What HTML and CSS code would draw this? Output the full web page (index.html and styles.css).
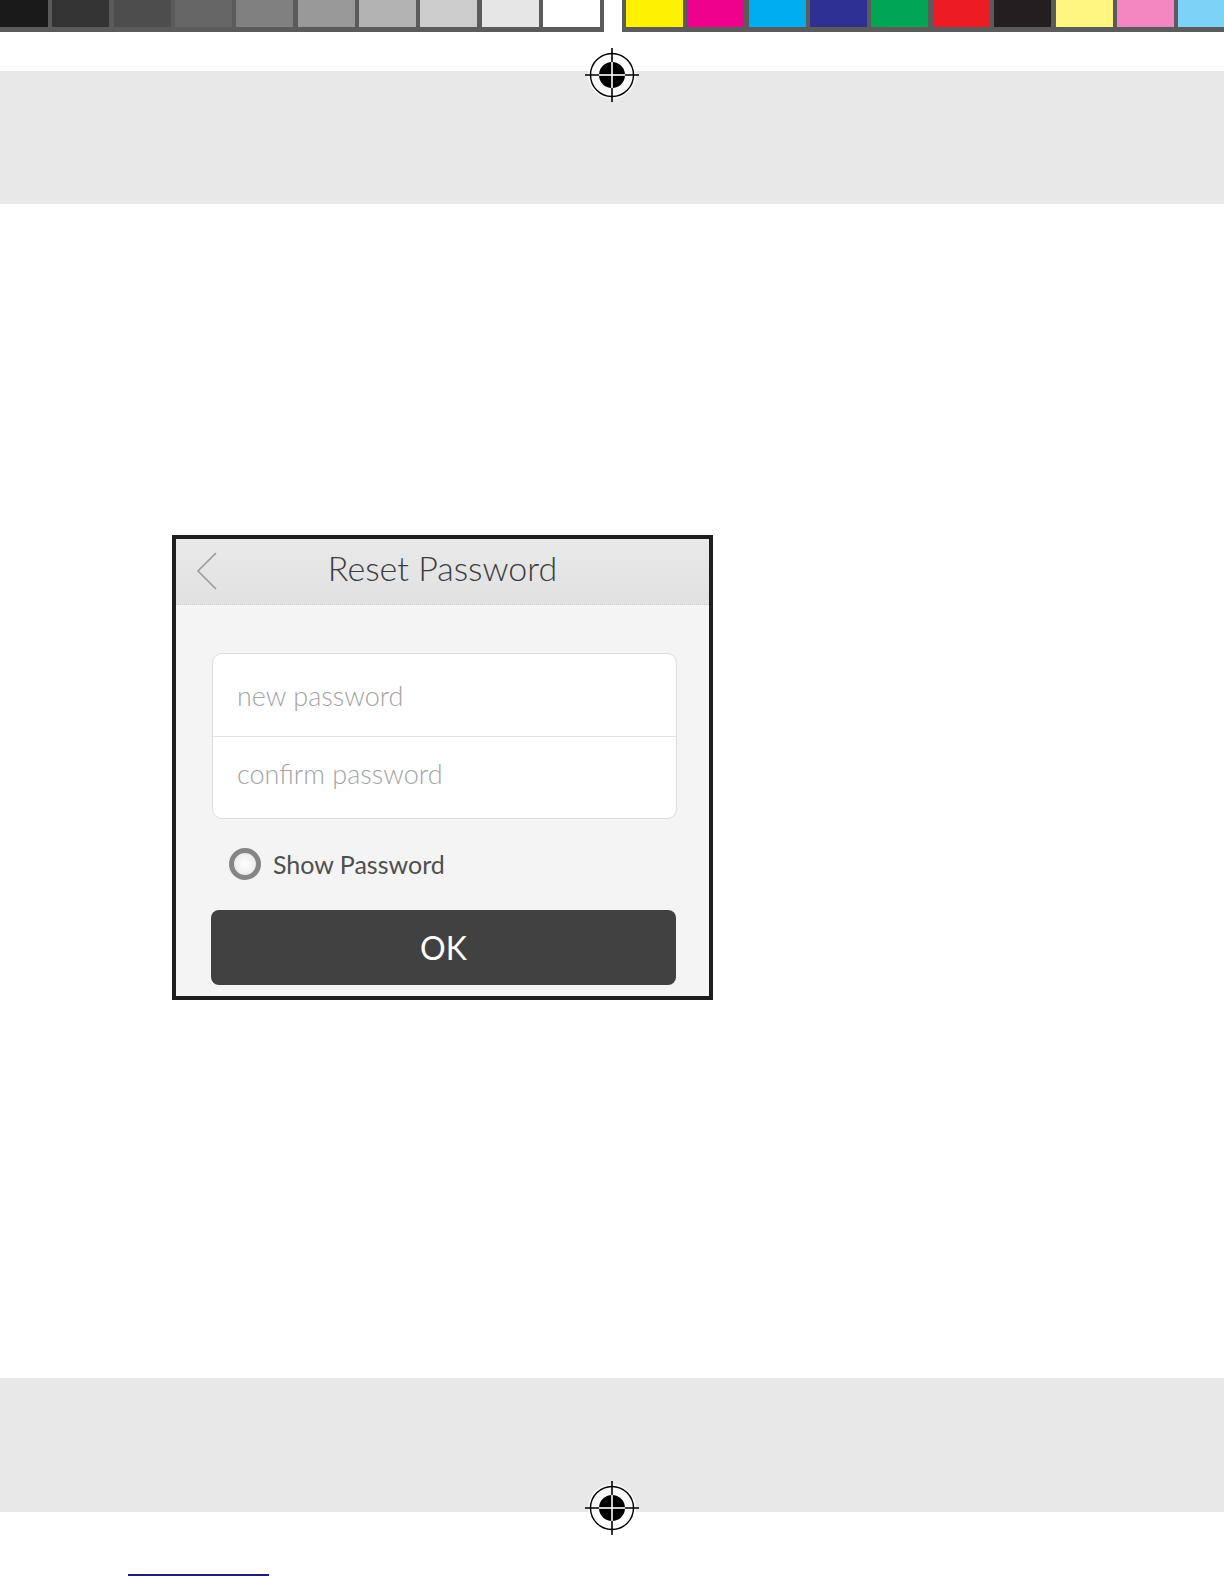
FILE: index.html
```html
<!DOCTYPE html>
<html lang="en">
<head>
    <meta charset="UTF-8">
    <meta name="viewport" content="width=device-width, initial-scale=1.0">
    <title>Reset Password</title>
    <link rel="stylesheet" href="styles.css">
</head>
<body>
    <div class="colorbar">
        <div class="bar bar-gray">
            <span class="swatch" style="background:#1a1a1a"></span>
            <span class="swatch" style="background:#333333"></span>
            <span class="swatch" style="background:#4d4d4d"></span>
            <span class="swatch" style="background:#666666"></span>
            <span class="swatch" style="background:#808080"></span>
            <span class="swatch" style="background:#999999"></span>
            <span class="swatch" style="background:#b3b3b3"></span>
            <span class="swatch" style="background:#cccccc"></span>
            <span class="swatch" style="background:#e6e6e6"></span>
            <span class="swatch" style="background:#ffffff"></span>
        </div>
        <div class="bar bar-color">
            <span class="swatch" style="background:#fff200"></span>
            <span class="swatch" style="background:#ec008c"></span>
            <span class="swatch" style="background:#00aeef"></span>
            <span class="swatch" style="background:#2e3192"></span>
            <span class="swatch" style="background:#00a651"></span>
            <span class="swatch" style="background:#ed1c24"></span>
            <span class="swatch" style="background:#231f20"></span>
            <span class="swatch" style="background:#fff681"></span>
            <span class="swatch" style="background:#f287c1"></span>
            <span class="swatch" style="background:#7dd3f7"></span>
        </div>
    </div>

    <div class="band band-top">
        <svg class="regmark regmark-top" width="56" height="56" viewBox="0 0 56 56">
            <circle cx="28" cy="28" r="24" fill="#fff" opacity="0.7"/>
            <circle cx="28" cy="28" r="21.5" fill="none" stroke="#000" stroke-width="1.4"/>
            <circle cx="28" cy="28" r="13" fill="#000"/>
            <line x1="28" y1="1" x2="28" y2="55" stroke="#000" stroke-width="1.6"/>
            <line x1="1" y1="28" x2="55" y2="28" stroke="#000" stroke-width="1.6"/>
            <line x1="28" y1="15" x2="28" y2="41" stroke="#fff" stroke-width="1.6"/>
            <line x1="15" y1="28" x2="41" y2="28" stroke="#fff" stroke-width="1.6"/>
        </svg>
    </div>

    <div class="content">
        <div class="dialog">
            <div class="dialog-header">
                <svg class="back-icon" width="22" height="38" viewBox="0 0 22 38">
                    <polyline points="20,1 2,19 20,37" fill="none" stroke="#9a9a9a" stroke-width="1.6"/>
                </svg>
                <h1>Reset Password</h1>
            </div>
            <div class="dialog-body">
                <div class="input-group">
                    <div class="input-row">new password</div>
                    <div class="input-row">confirm password</div>
                </div>
                <div class="show-password">
                    <span class="radio"></span>
                    <span>Show Password</span>
                </div>
                <button class="ok-btn">OK</button>
            </div>
        </div>
    </div>

    <div class="band band-bottom">
        <svg class="regmark regmark-bottom" width="56" height="56" viewBox="0 0 56 56">
            <circle cx="28" cy="28" r="24" fill="#fff" opacity="0.7"/>
            <circle cx="28" cy="28" r="21.5" fill="none" stroke="#000" stroke-width="1.4"/>
            <circle cx="28" cy="28" r="13" fill="#000"/>
            <line x1="28" y1="1" x2="28" y2="55" stroke="#000" stroke-width="1.6"/>
            <line x1="1" y1="28" x2="55" y2="28" stroke="#000" stroke-width="1.6"/>
            <line x1="28" y1="15" x2="28" y2="41" stroke="#fff" stroke-width="1.6"/>
            <line x1="15" y1="28" x2="41" y2="28" stroke="#fff" stroke-width="1.6"/>
        </svg>
    </div>

    <div class="footer-line"></div>
</body>
</html>
```

FILE: styles.css
```css
body {
    font-family: Lato, "Open Sans", sans-serif;
    margin: 0;
    background-color: #fff;
    overflow-x: hidden;
}
.colorbar {
    display: flex;
    gap: 18px;
    height: 32px;
    overflow: hidden;
}
.bar {
    display: flex;
    flex: 0 0 auto;
    gap: 4.35px;
    height: 27px;
    padding: 0 4px 5px;
    background-color: #5b5b5b;
}
.bar-gray {
    margin-left: -13px;
}
.swatch {
    flex: 0 0 57px;
    height: 27px;
}
.band {
    position: relative;
    background-color: #e8e8e8;
}
.band-top {
    margin-top: 39px;
    height: 133px;
}
.band-bottom {
    margin-top: 378px;
    height: 134px;
}
.regmark {
    position: absolute;
    left: 584px;
}
.regmark-top {
    top: -24px;
}
.regmark-bottom {
    top: 102px;
}
.content {
    padding: 331px 0 0 172px;
}
.dialog {
    box-sizing: border-box;
    width: 541px;
    height: 465px;
    border: 4px solid #1e1e1e;
    background-color: #f4f4f4;
}
.dialog-header {
    position: relative;
    box-sizing: border-box;
    display: flex;
    align-items: center;
    justify-content: center;
    height: 66px;
    padding-bottom: 8px;
    background: linear-gradient(#e9e9e9, #e1e1e1);
    border-bottom: 1px dotted #c9c9c9;
}
.dialog-header h1 {
    margin: 0;
    font-size: 34px;
    font-weight: 300;
    color: #3c3c3c;
}
.back-icon {
    position: absolute;
    left: 20px;
    top: 13px;
}
.dialog-body {
    padding: 48px 32px 0 36px;
}
.input-group {
    background-color: #fff;
    border: 1px solid #dcdcdc;
    border-radius: 10px;
}
.input-row {
    box-sizing: border-box;
    height: 82px;
    display: flex;
    align-items: center;
    padding: 0 0 0 24px;
    font-size: 27px;
    font-weight: 300;
    color: #a4a4a4;
}
.input-row + .input-row {
    border-top: 1px solid #e4e4e4;
    padding: 0 0 8px 24px;
}
.show-password {
    display: flex;
    align-items: center;
    gap: 12px;
    margin: 28px 0 0 17px;
    height: 34px;
    font-size: 25px;
    color: #4f4f4f;
}
.radio {
    box-sizing: border-box;
    width: 32px;
    height: 32px;
    border-radius: 50%;
    border: 5px solid #858585;
    background: radial-gradient(#ffffff, #e4e4e4);
}
.ok-btn {
    display: block;
    width: 465px;
    height: 75px;
    margin-top: 29px;
    margin-left: -1px;
    background-color: #414141;
    color: #fff;
    border: none;
    border-radius: 8px;
    font-family: Lato, "Open Sans", sans-serif;
    font-size: 32px;
    font-weight: 400;
}
.footer-line {
    margin: 62px 0 0 128px;
    width: 141px;
    height: 2px;
    background-color: #1c1c7a;
}
```
